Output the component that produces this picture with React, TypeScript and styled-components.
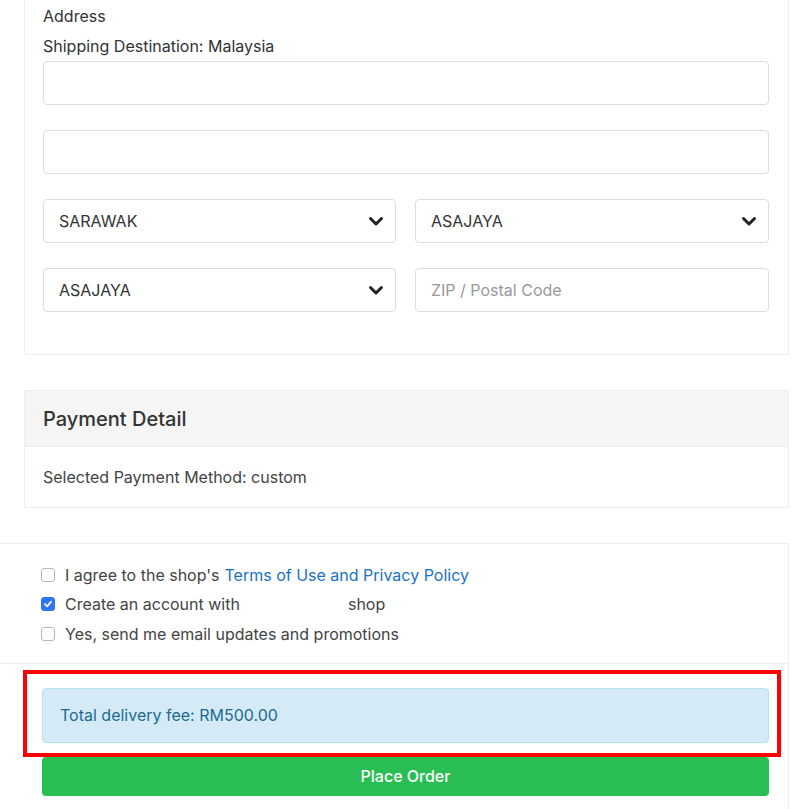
import React from "react";
import styled, { createGlobalStyle } from "styled-components";

const GlobalStyle = createGlobalStyle`
  body {
    margin: 0;
    background: #fff;
    font-family: Inter, "Noto Sans", "Liberation Sans", sans-serif;
    color: #333;
    font-size: 16px;
  }
  * { box-sizing: border-box; }
`;

const Page = styled.div`
  width: 811px;
  height: 809px;
  overflow: hidden;
`;

const Panel = styled.div<{ $noTop?: boolean; $top?: number }>`
  margin-left: 24px;
  margin-top: ${(p) => p.$top ?? 0}px;
  width: 765px;
  border: 1px solid #eee;
  border-top: ${(p) => (p.$noTop ? "none" : "1px solid #eee")};
  background: #fff;
`;

const PanelBody = styled.div`
  padding: 1px 19px 17px 18px;
`;

const Label = styled.div`
  line-height: 30px;
  height: 30px;
  font-size: 16px;
  color: #333;
`;

const Input = styled.div<{ $placeholder?: boolean; $select?: boolean }>`
  height: 44px;
  border: 1px solid #ddd;
  border-radius: 4px;
  margin-bottom: 25px;
  padding: ${(p) => (p.$select ? "0 11px 0 15px" : "0 15px")};
  display: flex;
  align-items: center;
  justify-content: space-between;
  font-size: 16px;
  color: ${(p) => (p.$placeholder ? "#999" : "#333")};
`;

const Row = styled.div`
  display: grid;
  grid-template-columns: 353px 1fr;
  column-gap: 19px;
`;

const PanelHeader = styled.div`
  background: #f5f5f5;
  border-bottom: 1px solid #eee;
  height: 56px;
  display: flex;
  align-items: center;
  padding: 0 18px;
  font-size: 20px;
  font-weight: 500;
  color: #333;
`;

const InfoText = styled.div`
  height: 60px;
  display: flex;
  align-items: center;
  padding: 0 18px;
  font-size: 16px;
  color: #444;
`;

const CheckoutSection = styled.div`
  margin-top: 35px;
  width: 789px;
  border-top: 1px solid #eee;
  border-right: 1px solid #eee;
  padding-bottom: 20px;
`;

const Options = styled.div`
  padding: 16px 0 14px 41px;
  border-bottom: 1px solid #eee;
`;

const OptionRow = styled.label`
  display: flex;
  align-items: center;
  height: 29.5px;
  font-size: 16px;
  color: #444;
`;

const Box = styled.span<{ $checked?: boolean }>`
  width: 14px;
  height: 14px;
  border-radius: 3px;
  margin-right: 10px;
  display: inline-flex;
  align-items: center;
  justify-content: center;
  border: 1px solid ${(p) => (p.$checked ? "#2f74f0" : "#b8b8b8")};
  background: ${(p) => (p.$checked ? "#2f74f0" : "#fff")};
`;

const Link = styled.a`
  color: #1a72c2;
  text-decoration: none;
  margin-left: 5px;
`;

const Gap = styled.span`
  display: inline-block;
  width: 108px;
`;

const Highlight = styled.div`
  margin: 6px 0 0 23px;
  width: 758px;
  height: 87px;
  border: 4px solid #f00;
  padding: 14px 8px 0 15px;
`;

const Alert = styled.div`
  height: 55px;
  background: #d4ebf7;
  border: 1px solid #b6e1f1;
  border-radius: 4px;
  display: flex;
  align-items: center;
  padding: 0 17px;
  font-size: 16px;
  color: #1e6a90;
`;

const OrderButton = styled.button`
  display: block;
  margin: 0 0 0 42px;
  width: 727px;
  height: 39px;
  border: none;
  border-radius: 4px;
  background: #28be53;
  color: #fff;
  font-family: inherit;
  font-size: 16px;
  font-weight: 500;
`;

function Chevron() {
  return (
    <svg width="16" height="16" viewBox="0 0 16 16">
      <path d="M2.5 5.5 L8 11 L13.5 5.5" fill="none" stroke="#222" strokeWidth="3" strokeLinecap="round" strokeLinejoin="round" />
    </svg>
  );
}

function Check({ checked }: { checked?: boolean }) {
  return (
    <Box $checked={checked}>
      {checked && (
        <svg width="10" height="10" viewBox="0 0 10 10">
          <path d="M2 5.2 L4.2 7.4 L8 2.8" fill="none" stroke="#fff" strokeWidth="1.8" strokeLinecap="round" strokeLinejoin="round" />
        </svg>
      )}
    </Box>
  );
}

function Select({ value }: { value: string }) {
  return (
    <Input $select>
      <span>{value}</span>
      <Chevron />
    </Input>
  );
}

export default function App() {
  return (
    <Page>
      <GlobalStyle />
      <Panel $noTop>
        <PanelBody>
          <Label>Address</Label>
          <Label>Shipping Destination: Malaysia</Label>
          <Input />
          <Input />
          <Row>
            <Select value="SARAWAK" />
            <Select value="ASAJAYA" />
          </Row>
          <Row>
            <Select value="ASAJAYA" />
            <Input $placeholder>ZIP / Postal Code</Input>
          </Row>
        </PanelBody>
      </Panel>

      <Panel $top={35}>
        <PanelHeader>Payment Detail</PanelHeader>
        <InfoText>Selected Payment Method: custom</InfoText>
      </Panel>

      <CheckoutSection>
        <Options>
          <OptionRow>
            <Check />
            I agree to the shop's<Link href="#">Terms of Use and Privacy Policy</Link>
          </OptionRow>
          <OptionRow>
            <Check checked />
            Create an account with<Gap />shop
          </OptionRow>
          <OptionRow>
            <Check />
            Yes, send me email updates and promotions
          </OptionRow>
        </Options>
        <Highlight>
          <Alert>Total delivery fee: RM500.00</Alert>
        </Highlight>
        <OrderButton>Place Order</OrderButton>
      </CheckoutSection>
    </Page>
  );
}
